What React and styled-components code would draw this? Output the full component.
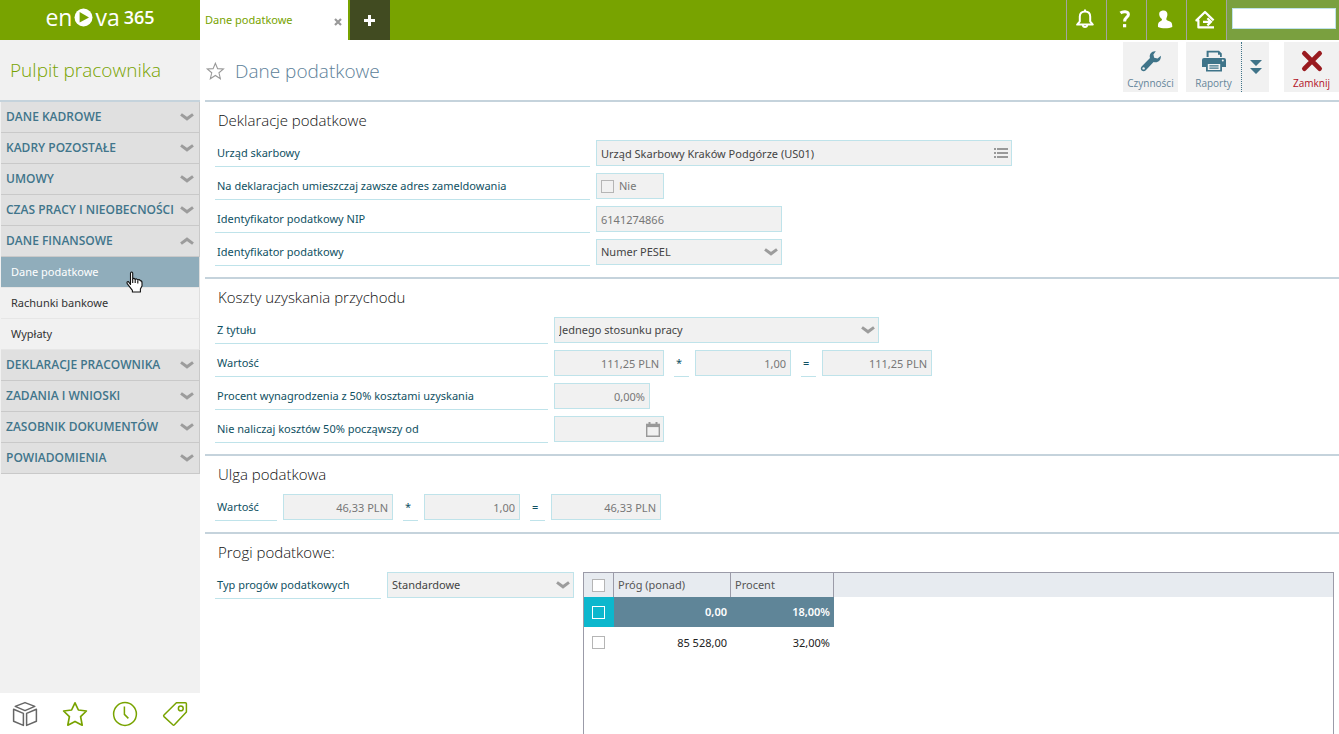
import React, { useState } from 'react'
import styled, { createGlobalStyle, css } from 'styled-components'

const GlobalStyle = createGlobalStyle`
    * {
        box-sizing: border-box;
    }
    body {
        margin: 0;
        background: #fff;
        color: #333;
        font-family: 'Noto Sans', 'Open Sans', sans-serif;
        font-size: 11px;
        line-height: 16px;
    }
    button, input, select {
        font: inherit;
        color: inherit;
        margin: 0;
        padding: 0;
        border: 0;
        border-radius: 0;
        background: none;
    }
    button {
        cursor: pointer;
    }
`

const Page = styled.div`
    display: flex;
    flex-direction: column;
    height: 100vh;
    overflow: hidden;
`

const TopBar = styled.header`
    display: flex;
    flex: none;
    height: 40px;
    background: #78a300;
    color: #fff;
`

const Logo = styled.a`
    display: flex;
    align-items: center;
    justify-content: center;
    width: 200px;
    padding-bottom: 6px;
    color: #fff;
    font-family: 'Open Sans', sans-serif;
    font-size: 23px;
    line-height: 32px;
    text-decoration: none;

    svg {
        margin: 0 2px;
    }
    b {
        margin-left: 4px;
        font-size: 18px;
        font-weight: 600;
    }
`

const Tab = styled.div`
    display: flex;
    align-items: center;
    justify-content: space-between;
    width: 148px;
    padding: 0 6px 0 5px;
    background: #fff;
    color: #78a300;
`

const TabClose = styled.button`
    display: flex;
    padding-top: 3px;
`

const AddTab = styled.button`
    display: flex;
    align-items: center;
    justify-content: center;
    width: 40px;
    margin-left: 2px;
    padding-right: 1px;
    background: #414b21;
`

const TopActions = styled.div`
    display: flex;
    margin-left: auto;
`

const TopAction = styled.button`
    display: flex;
    align-items: center;
    justify-content: center;
    width: 40px;
    padding: 0 4px 2px 0;
    border-left: 1px solid #a3a3a3;
`

const SearchBox = styled.div`
    display: flex;
    align-items: flex-start;
    width: 113px;
    padding: 8px 3px 0 5px;
    border-left: 1px solid #a3a3a3;
    background: #7aa03f;

    input {
        width: 100%;
        height: 21px;
        border: 1px solid #bfe3ea;
        background: #fff;
        color: #333;
    }
`

const Body = styled.div`
    display: flex;
    flex: 1;
    min-height: 0;
`

const Sidebar = styled.aside`
    display: flex;
    flex: none;
    flex-direction: column;
    width: 200px;
    background: #f1f1f1;
`

const SidebarTitle = styled.h2`
    display: flex;
    align-items: center;
    height: 60px;
    margin: 0;
    padding: 0 10px;
    color: #78a300;
    font-family: 'Open Sans', sans-serif;
    font-size: 19px;
    font-weight: 300;
`

const Menu = styled.nav`
    display: flex;
    flex: 1;
    flex-direction: column;
    padding-left: 1px;
    border-top: 2px solid #c5d3dc;
`

const MenuGroup = styled.button`
    display: flex;
    align-items: center;
    justify-content: space-between;
    height: 31px;
    padding: 0 5px;
    border-right: 1px solid #c9c9c9;
    border-bottom: 1px solid #c9c9c9;
    background: #e0e0e0;
    color: #41758b;
    font-family: 'Open Sans', sans-serif;
    font-size: 12px;
    font-weight: 600;
    text-align: left;
    white-space: nowrap;
`

const MenuLink = styled.a`
    display: flex;
    align-items: center;
    height: 31px;
    padding: 0 10px;
    border-right: 1px solid #dedede;
    border-bottom: 1px solid #e6e6e6;
    color: #333;
    text-decoration: none;

    ${({ $active }) => $active && css`
        background: #90adbb;
        color: #fff;
    `}
`

const SidebarFooter = styled.div`
    display: grid;
    grid-template-columns: repeat(4, 1fr);
    height: 41px;
    background: #fff;
`

const FooterButton = styled.button`
    display: flex;
    align-items: center;
    justify-content: center;
    color: ${({ $muted }) => ($muted ? '#666' : '#78a300')};
`

const Content = styled.main`
    display: flex;
    flex: 1;
    flex-direction: column;
    min-width: 0;
    padding-left: 5px;
`

const PageHead = styled.div`
    display: flex;
    flex: none;
    height: 60px;
`

const PageTitle = styled.h1`
    display: flex;
    flex: 1;
    align-items: center;
    gap: 10px;
    margin: 0;
    padding-top: 2px;
    color: #5d8199;
    font-family: 'Open Sans', sans-serif;
    font-size: 19px;
    font-weight: 300;
`

const Toolbar = styled.div`
    display: flex;
    height: 50px;
    margin-top: 2px;
`

const Tool = styled.button`
    display: flex;
    flex-direction: column;
    align-items: center;
    justify-content: space-between;
    width: 55px;
    padding: 8px 0 2px;
    background: #f1f1f1;
    color: ${({ $danger }) => ($danger ? '#b10f1f' : '#64859a')};
    font-family: 'Open Sans', sans-serif;
    font-size: 10px;
    line-height: 14px;

    & + & {
        margin-left: 8px;
    }
`

const ToolMore = styled.button`
    display: flex;
    align-items: center;
    justify-content: center;
    width: 28px;
    margin-right: 15px;
    border-left: 1px dotted #3f7489;
    background: #f1f1f1;
`

const Section = styled.section`
    flex: ${({ $fill }) => ($fill ? '1' : 'none')};
    min-height: 0;
    display: flex;
    flex-direction: column;
    padding: 0 5px ${({ $fill }) => ($fill ? '0' : '11px')} 10px;
    border-top: 2px solid #c5d3dc;
`

const SectionTitle = styled.h3`
    flex: none;
    height: 38px;
    margin: 0;
    padding-left: 3px;
    color: #111;
    font-family: 'Open Sans', sans-serif;
    font-size: 15px;
    font-weight: 300;
    line-height: 36px;
`

const Rows = styled.div`
    display: flex;
    flex-direction: column;
    gap: 6px;
`

const Row = styled.div`
    display: flex;
    height: 27px;
`

const Label = styled.label`
    width: ${({ $w }) => $w}px;
    height: 27px;
    margin-right: 6px;
    padding-left: 2px;
    border-bottom: 1px solid #bfe3ea;
    color: #0f5163;
    line-height: 26px;
    white-space: nowrap;
`

const Operator = styled.span`
    width: 15px;
    height: 27px;
    margin: 0 6px 0 10px;
    border-bottom: 1px solid #bfe3ea;
    color: #0f5163;
    line-height: 26px;
    padding-left: 2px;
`

const Box = styled.div`
    display: flex;
    align-items: center;
    width: ${({ $w }) => $w}px;
    height: 26px;
    border: 1px solid #bfe3ea;
    background: #f1f1f1;
    color: ${({ $dark }) => ($dark ? '#444' : '#777')};
`

const TextInput = styled.input`
    flex: 1;
    width: 100%;
    height: 24px;
    padding: 0 4px;
    text-align: ${({ $right }) => ($right ? 'right' : 'left')};
`

const InnerButton = styled.button`
    display: flex;
    margin-right: 3px;
`

const SelectBox = styled(Box)`
    display: grid;

    select, svg {
        grid-area: 1 / 1;
    }
    select {
        width: 100%;
        height: 24px;
        padding: 0 20px 0 4px;
        appearance: none;
    }
    svg {
        justify-self: end;
        margin-right: 3px;
        pointer-events: none;
    }
`

const Check = styled.input.attrs({ type: 'checkbox' })`
    display: block;
    width: 13px;
    height: 13px;
    appearance: none;
    border: 1px solid ${({ $light }) => ($light ? '#fff' : '#b5b5b5')};
    background: ${({ $solid }) => ($solid ? '#fff' : 'transparent')};
`

const CheckWrap = styled.div`
    display: flex;
    align-items: center;
    gap: 5px;
    padding-left: 4px;
`

const Split = styled.div`
    display: flex;
    flex: 1;
    min-height: 0;
`

const GridFrame = styled.div`
    flex: 1;
    min-width: 0;
    margin-left: 9px;
    border: 1px solid #9b9ba8;
    border-bottom: 0;
`

const Grid = styled.table`
    width: 100%;
    table-layout: fixed;
    border-spacing: 0;

    th, td {
        padding: 0 4px;
    }
    th {
        height: 24px;
        border-right: 1px solid #9b9ba8;
        background: #e7ebf0;
        color: #555;
        font-weight: 400;
        text-align: left;
    }
    th:last-child {
        border-right: 0;
    }
    td {
        height: 31px;
        text-align: right;
        color: #222;
    }
    th:first-child, td:first-child {
        padding-left: 8px;
    }
`

const GridRow = styled.tr`
    ${({ $selected }) => $selected && css`
        && td {
            height: 30px;
            background: #5f8598;
            color: #fff;
            font-weight: 600;
        }
        && td:first-child {
            background: #0cb7cd;
        }
        && td:last-child {
            background: none;
        }
    `}
`

const Pointer = styled.svg`
    position: absolute;
    top: 271px;
    left: 126px;
    pointer-events: none;
`

const Chevron = ({ up }) => (
    <svg width="14" height="8" viewBox="0 0 14 8" fill="none" stroke="#9c9c9c" strokeWidth="3">
        <path d={up ? 'M1 6.6 L7 2.2 L13 6.6' : 'M1 1.4 L7 5.8 L13 1.4'} />
    </svg>
)

const Select = ({ id, w, value }) => (
    <SelectBox $w={w} $dark>
        <select id={id} defaultValue={value}>
            <option>{value}</option>
        </select>
        <Chevron />
    </SelectBox>
)

const Amount = ({ id, w, value, label }) => (
    <Box $w={w}>
        <TextInput id={id} aria-label={label} defaultValue={value} readOnly $right />
    </Box>
)

const menu = [
    { name: 'DANE KADROWE' },
    { name: 'KADRY POZOSTAŁE' },
    { name: 'UMOWY' },
    { name: 'CZAS PRACY I NIEOBECNOŚCI' },
    { name: 'DANE FINANSOWE', items: ['Dane podatkowe', 'Rachunki bankowe', 'Wypłaty'] },
    { name: 'DEKLARACJE PRACOWNIKA' },
    { name: 'ZADANIA I WNIOSKI' },
    { name: 'ZASOBNIK DOKUMENTÓW' },
    { name: 'POWIADOMIENIA' },
]

const thresholds = [
    { from: '0,00', percent: '18,00%' },
    { from: '85 528,00', percent: '32,00%' },
]

const Header = () => (
    <TopBar>
        <Logo href="#">
            en
            <svg width="19" height="19" viewBox="0 0 19 19">
                <circle cx="9.5" cy="9.5" r="9" fill="#fff" />
                <path d="M5.6 4 L15 9.5 L5.6 14.6 Z" fill="#78a300" />
            </svg>
            va<b>365</b>
        </Logo>
        <Tab>
            Dane podatkowe
            <TabClose aria-label="Zamknij kartę">
                <svg width="8" height="8" viewBox="0 0 8 8" stroke="#999" strokeWidth="2.2">
                    <path d="M1 1 L7 7 M7 1 L1 7" />
                </svg>
            </TabClose>
        </Tab>
        <AddTab aria-label="Nowa karta">
            <svg width="11" height="11" viewBox="0 0 11 11" stroke="#fff" strokeWidth="3">
                <path d="M5.5 0 V11 M0 5.5 H11" />
            </svg>
        </AddTab>
        <TopActions>
            <TopAction aria-label="Powiadomienia">
                <svg width="18" height="20" viewBox="0 0 18 20" fill="none" stroke="#fff" strokeWidth="2">
                    <path d="M1.2 15.6 H16.8 L14.2 12.4 V7.5 C14.2 4.4 12.2 2.4 9 2.4 C5.8 2.4 3.8 4.4 3.8 7.5 V12.4 Z" strokeLinejoin="round" />
                    <path d="M9 0.5 V2.4 M6.8 16 C7 18.8 11 18.8 11.2 16" />
                </svg>
            </TopAction>
            <TopAction aria-label="Pomoc">
                <svg width="12" height="18" viewBox="0 0 12 18" fill="none" stroke="#fff" strokeWidth="3">
                    <path d="M1.5 3 C3.6 1.2 9.4 0.8 9.4 4.4 C9.4 7.2 5.6 7.2 5.6 11.4" />
                    <path d="M4 15.7 H7.2" strokeWidth="3.2" />
                </svg>
            </TopAction>
            <TopAction aria-label="Użytkownik">
                <svg width="16" height="19" viewBox="0 0 16 19" fill="#fff">
                    <path d="M5.6 0.5 C8.8 0 10.6 1.8 10.4 4.8 C10.3 6.7 9.5 7.6 9.3 9 C9.2 10.4 11.2 10.8 13 11.6 C15 12.6 15.3 14 15.3 17 C12 18.8 4.4 18.8 1 17 C0.8 14 1.2 12.6 3 11.6 C4.4 10.8 5.2 10.4 4.9 9 C3.6 8 2.4 6.4 2.2 4.4 C2 2 3.4 0.8 5.6 0.5 Z" />
                </svg>
            </TopAction>
            <TopAction aria-label="Wyloguj">
                <svg width="20" height="19" viewBox="0 0 20 19" fill="none" stroke="#fff" strokeWidth="2.2">
                    <path d="M19 17.4 H3.4 V10.4 H1.4 L10 2 L18.6 10.4" strokeLinejoin="round" />
                    <path d="M8 11.8 H15.5 M12.4 8.2 L16 11.8 L12.4 15.4" />
                </svg>
            </TopAction>
            <SearchBox>
                <input type="text" aria-label="Szukaj" />
            </SearchBox>
        </TopActions>
    </TopBar>
)

const SideMenu = () => {
    const [open, setOpen] = useState('DANE FINANSOWE')
    return (
        <Sidebar>
            <SidebarTitle>Pulpit pracownika</SidebarTitle>
            <Menu>
                {menu.map(({ name, items }) => (
                    <React.Fragment key={name}>
                        <MenuGroup onClick={() => setOpen(open === name ? null : name)}>
                            {name}
                            <Chevron up={open === name} />
                        </MenuGroup>
                        {open === name && items && items.map((item, i) => (
                            <MenuLink key={item} href="#" $active={i === 0}>{item}</MenuLink>
                        ))}
                    </React.Fragment>
                ))}
            </Menu>
            <SidebarFooter>
                <FooterButton $muted aria-label="Moduły">
                    <svg width="26" height="26" viewBox="0 0 26 26" fill="none" stroke="currentColor" strokeWidth="1.5" strokeLinejoin="round">
                        <path d="M13 1.6 L22.8 5.4 L13 9.6 L3.2 5.4 Z" />
                        <path d="M1.6 8.2 L11.4 12.4 V24.4 L1.6 20.2 Z" />
                        <path d="M24.4 8.2 L14.6 12.4 V24.4 L24.4 20.2 Z" />
                    </svg>
                </FooterButton>
                <FooterButton aria-label="Ulubione">
                    <svg width="26" height="26" viewBox="0 0 26 26" fill="none" stroke="currentColor" strokeWidth="1.7" strokeLinejoin="round">
                        <path d="M13 1.8 L16.4 9 L24.4 10 L18.6 15.6 L20.2 24.2 L13 20.4 L5.8 24.2 L7.4 15.6 L1.6 10 L9.6 9 Z" />
                    </svg>
                </FooterButton>
                <FooterButton aria-label="Ostatnie">
                    <svg width="26" height="26" viewBox="0 0 26 26" fill="none" stroke="currentColor" strokeWidth="1.5">
                        <circle cx="13" cy="13" r="11.4" />
                        <path d="M12.4 5.4 V13.4 L16.4 17.4" />
                    </svg>
                </FooterButton>
                <FooterButton aria-label="Etykiety">
                    <svg width="26" height="26" viewBox="0 0 26 26" fill="none" stroke="currentColor" strokeWidth="1.5" strokeLinejoin="round">
                        <path d="M14.4 1.8 H23.4 Q24.4 1.8 24.4 2.8 V11 L12.4 23.8 Q11.6 24.6 10.8 23.8 L2 15.6 Q1.2 14.8 2 14 Z" />
                        <circle cx="18.8" cy="7.4" r="2.4" />
                    </svg>
                </FooterButton>
            </SidebarFooter>
        </Sidebar>
    )
}

const Heading = () => (
    <PageHead>
        <PageTitle>
            <svg width="20" height="18" viewBox="-1 0 22 20" fill="none" stroke="#999" strokeWidth="1.2">
                <path d="M10.4 1.4 L12.9 7.4 L19.4 7.8 L14.4 12 L16 18.6 L10.4 15 L4.8 18.6 L6.4 12 L1.4 7.8 L7.9 7.4 Z" />
            </svg>
            Dane podatkowe
        </PageTitle>
        <Toolbar>
            <Tool>
                <svg width="22" height="22" viewBox="0 0 22 22" fill="#3f7489">
                    <path d="M15.8 1.2 C12 0.6 8.8 3.8 10 8 L1.6 16.4 C0.2 18 0.8 20 2 20.8 C3.2 21.6 4.8 21.4 5.8 20.2 L13.6 12 C17.6 13.4 21.4 10.2 20.8 5.8 L17.6 8.6 L14.2 7.8 L13.4 4.4 Z" />
                    <circle cx="3.6" cy="18.4" r="1.2" fill="#f1f1f1" />
                </svg>
                Czynności
            </Tool>
            <Tool>
                <svg width="24" height="22" viewBox="0 0 24 22" fill="#3f7489">
                    <path d="M4.6 0.8 H17 L19.8 3.4 V7 H4.6 Z" />
                    <path d="M6.6 2.6 H16 V4.8 H18 V7 H6.6 Z" fill="#f1f1f1" />
                    <path d="M2 8 H22 Q24 8 24 10 V17 H20 V21.4 H4 V17 H0 V10 Q0 8 2 8 Z" />
                    <path d="M5.8 14 H18.2 V20 H5.8 Z" fill="#f1f1f1" />
                    <path d="M7.4 15.2 H16.6 V16.4 H7.4 Z M7.4 17.6 H16.6 V18.8 H7.4 Z" />
                    <circle cx="20.8" cy="10.4" r="1" fill="#f1f1f1" />
                </svg>
                Raporty
            </Tool>
            <ToolMore aria-label="Więcej">
                <svg width="12" height="14" viewBox="0 0 12 14" fill="#3f7489">
                    <path d="M0 0 H12 L6 6 Z M0 8 H12 L6 14 Z" />
                </svg>
            </ToolMore>
            <Tool $danger>
                <svg width="22" height="22" viewBox="0 0 22 22" stroke="#991a1f" strokeWidth="4.8" strokeLinecap="round">
                    <path d="M3.4 3.4 L18.6 18.6 M18.6 3.4 L3.4 18.6" />
                </svg>
                Zamknij
            </Tool>
        </Toolbar>
    </PageHead>
)

const Declarations = () => (
    <Section>
        <SectionTitle>Deklaracje podatkowe</SectionTitle>
        <Rows>
            <Row>
                <Label $w={375} htmlFor="urzad">Urząd skarbowy</Label>
                <Box $w={416} $dark>
                    <TextInput id="urzad" defaultValue="Urząd Skarbowy Kraków Podgórze (US01)" readOnly />
                    <InnerButton aria-label="Wybierz z listy">
                        <svg width="14" height="10" viewBox="0 0 14 10" fill="#999">
                            <path d="M0 0 H2 V2 H0 Z M3 0 H14 V2 H3 Z M0 4 H2 V6 H0 Z M3 4 H14 V6 H3 Z M0 8 H2 V10 H0 Z M3 8 H14 V10 H3 Z" />
                        </svg>
                    </InnerButton>
                </Box>
            </Row>
            <Row>
                <Label $w={375} htmlFor="adres">Na deklaracjach umieszczaj zawsze adres zameldowania</Label>
                <Box $w={68}>
                    <CheckWrap>
                        <Check id="adres" />
                        Nie
                    </CheckWrap>
                </Box>
            </Row>
            <Row>
                <Label $w={375} htmlFor="nip">Identyfikator podatkowy NIP</Label>
                <Box $w={186}>
                    <TextInput id="nip" defaultValue="6141274866" readOnly />
                </Box>
            </Row>
            <Row>
                <Label $w={375} htmlFor="ident">Identyfikator podatkowy</Label>
                <Select id="ident" w={186} value="Numer PESEL" />
            </Row>
        </Rows>
    </Section>
)

const Costs = () => (
    <Section>
        <SectionTitle>Koszty uzyskania przychodu</SectionTitle>
        <Rows>
            <Row>
                <Label $w={333} htmlFor="tytul">Z tytułu</Label>
                <Select id="tytul" w={325} value="Jednego stosunku pracy" />
            </Row>
            <Row>
                <Label $w={333} htmlFor="koszt">Wartość</Label>
                <Amount id="koszt" w={110} value="111,25 PLN" />
                <Operator>*</Operator>
                <Amount label="Mnożnik kosztów" w={96} value="1,00" />
                <Operator>=</Operator>
                <Amount label="Koszty razem" w={110} value="111,25 PLN" />
            </Row>
            <Row>
                <Label $w={333} htmlFor="procent">Procent wynagrodzenia z 50% kosztami uzyskania</Label>
                <Amount id="procent" w={96} value="0,00%" />
            </Row>
            <Row>
                <Label $w={333} htmlFor="odkiedy">Nie naliczaj kosztów 50% począwszy od</Label>
                <Box $w={110}>
                    <TextInput id="odkiedy" readOnly />
                    <InnerButton aria-label="Kalendarz">
                        <svg width="14" height="15" viewBox="0 0 14 15" fill="none" stroke="#999">
                            <path d="M0.7 3 H13.3 V14.3 H0.7 Z" strokeWidth="1.4" />
                            <path d="M0 3.4 H14" strokeWidth="3.4" />
                            <path d="M3.5 0 V3 M10.5 0 V3" strokeWidth="2" />
                        </svg>
                    </InnerButton>
                </Box>
            </Row>
        </Rows>
    </Section>
)

const Relief = () => (
    <Section>
        <SectionTitle>Ulga podatkowa</SectionTitle>
        <Row>
            <Label $w={62} htmlFor="ulga">Wartość</Label>
            <Amount id="ulga" w={110} value="46,33 PLN" />
            <Operator>*</Operator>
            <Amount label="Mnożnik ulgi" w={96} value="1,00" />
            <Operator>=</Operator>
            <Amount label="Ulga razem" w={110} value="46,33 PLN" />
        </Row>
    </Section>
)

const Thresholds = () => (
    <Section $fill>
        <SectionTitle>Progi podatkowe:</SectionTitle>
        <Split>
            <Label $w={166} htmlFor="typ">Typ progów podatkowych</Label>
            <Select id="typ" w={187} value="Standardowe" />
            <GridFrame>
                <Grid>
                    <colgroup>
                        <col width="30" />
                        <col width="117" />
                        <col width="103" />
                        <col />
                    </colgroup>
                    <thead>
                        <tr>
                            <th><Check $solid aria-label="Zaznacz wszystkie" /></th>
                            <th>Próg (ponad)</th>
                            <th>Procent</th>
                            <th />
                        </tr>
                    </thead>
                    <tbody>
                        {thresholds.map((row, i) => (
                            <GridRow key={row.from} $selected={i === 0}>
                                <td><Check $light={i === 0} aria-label={`Zaznacz próg ${row.from}`} /></td>
                                <td>{row.from}</td>
                                <td>{row.percent}</td>
                                <td />
                            </GridRow>
                        ))}
                    </tbody>
                </Grid>
            </GridFrame>
        </Split>
    </Section>
)

const App = () => {
    return (
        <>
            <GlobalStyle />
            <Page>
                <Header />
                <Body>
                    <SideMenu />
                    <Content>
                        <Heading />
                        <Declarations />
                        <Costs />
                        <Relief />
                        <Thresholds />
                    </Content>
                </Body>
            </Page>
            <Pointer width="17" height="22" viewBox="0 0 17 22" fill="#fff" stroke="#111" strokeWidth="1.1" strokeLinejoin="round">
                <path d="M4.5 13.5 V2 Q5.6 0 6.7 2 V8 Q8 6.6 9.2 8.4 Q10.6 7.2 11.8 9 Q13.2 8 14.4 9.6 Q16.2 9.8 16 12 V15 L14.4 18 V21 H6.4 V19.4 L1.2 12.6 Q0.4 10.4 2.4 10.6 Z" />
                <path d="M6.7 8 V12 M9.2 8.6 V12 M11.8 9.4 V12.4" />
            </Pointer>
        </>
    )
}

export default App
